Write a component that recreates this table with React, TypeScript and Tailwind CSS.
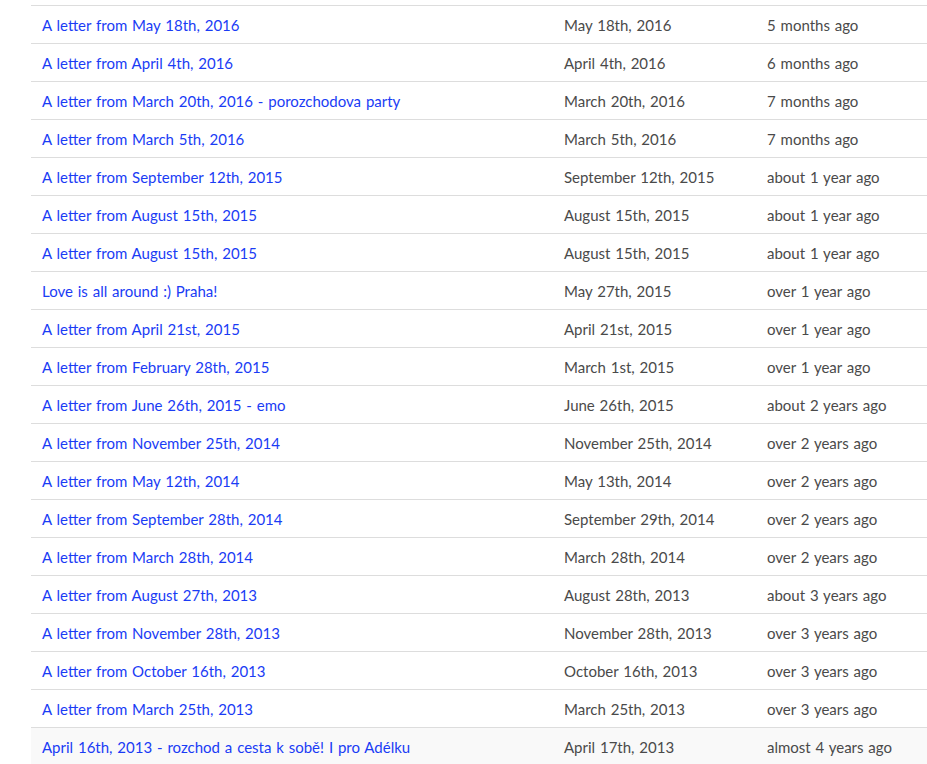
import React from "react";

const rows: [string, string, string][] = [
  ["A letter from May 18th, 2016", "May 18th, 2016", "5 months ago"],
  ["A letter from April 4th, 2016", "April 4th, 2016", "6 months ago"],
  ["A letter from March 20th, 2016 - porozchodova party", "March 20th, 2016", "7 months ago"],
  ["A letter from March 5th, 2016", "March 5th, 2016", "7 months ago"],
  ["A letter from September 12th, 2015", "September 12th, 2015", "about 1 year ago"],
  ["A letter from August 15th, 2015", "August 15th, 2015", "about 1 year ago"],
  ["A letter from August 15th, 2015", "August 15th, 2015", "about 1 year ago"],
  ["Love is all around :) Praha!", "May 27th, 2015", "over 1 year ago"],
  ["A letter from April 21st, 2015", "April 21st, 2015", "over 1 year ago"],
  ["A letter from February 28th, 2015", "March 1st, 2015", "over 1 year ago"],
  ["A letter from June 26th, 2015 - emo", "June 26th, 2015", "about 2 years ago"],
  ["A letter from November 25th, 2014", "November 25th, 2014", "over 2 years ago"],
  ["A letter from May 12th, 2014", "May 13th, 2014", "over 2 years ago"],
  ["A letter from September 28th, 2014", "September 29th, 2014", "over 2 years ago"],
  ["A letter from March 28th, 2014", "March 28th, 2014", "over 2 years ago"],
  ["A letter from August 27th, 2013", "August 28th, 2013", "about 3 years ago"],
  ["A letter from November 28th, 2013", "November 28th, 2013", "over 3 years ago"],
  ["A letter from October 16th, 2013", "October 16th, 2013", "over 3 years ago"],
  ["A letter from March 25th, 2013", "March 25th, 2013", "over 3 years ago"],
  ["April 16th, 2013 - rozchod a cesta k sobě! I pro Adélku", "April 17th, 2013", "almost 4 years ago"],
];

export default function App() {
  return (
    <div
      className="w-[927px] h-[764px] overflow-hidden bg-white pt-[5px] pl-[31px]"
      style={{ fontFamily: "Lato, 'Open Sans', sans-serif" }}
    >
      <div className="border-t border-[#dddddd]">
        {rows.map((r, i) => (
          <div
            key={i}
            className={`grid grid-cols-[522px_203px_1fr] h-[38px] items-center border-b border-[#dddddd] text-[15px] pt-px [word-spacing:1px] ${
              i === rows.length - 1 ? "bg-[#f9f9f9]" : ""
            }`}
          >
            <div className="pl-[11px] text-[#1a3cf5] whitespace-nowrap">{r[0]}</div>
            <div className="pl-[11px] text-[#4a4a4a] whitespace-nowrap">{r[1]}</div>
            <div className="pl-[11px] text-[#4a4a4a] whitespace-nowrap">{r[2]}</div>
          </div>
        ))}
      </div>
    </div>
  );
}
